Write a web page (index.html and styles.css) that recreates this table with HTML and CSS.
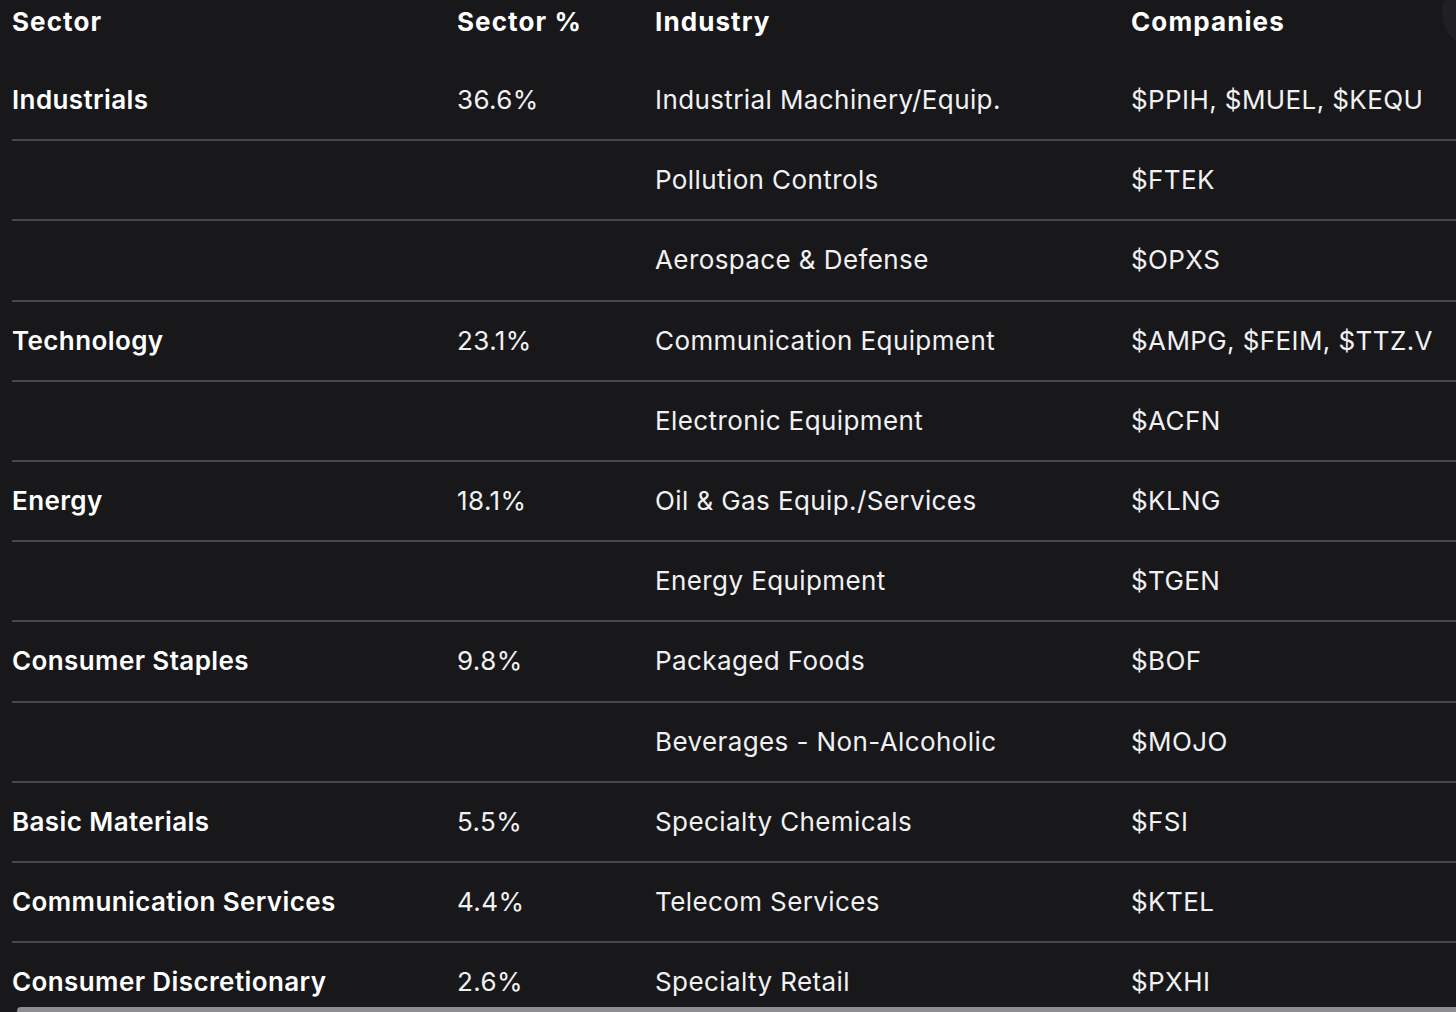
FILE: index.html
```html
<!DOCTYPE html>
<html lang="en">
<head>
<meta charset="utf-8">
<title>Sector breakdown</title>
<link rel="stylesheet" href="styles.css">
</head>
<body>
<div class="scroller">
  <table class="sectors">
    <thead>
      <tr>
        <th class="c-sector">Sector</th>
        <th class="c-pct">Sector %</th>
        <th class="c-ind">Industry</th>
        <th class="c-co">Companies</th>
      </tr>
    </thead>
    <tbody>
      <tr><td class="name">Industrials</td><td>36.6%</td><td>Industrial Machinery/Equip.</td><td>$PPIH, $MUEL, $KEQU</td></tr>
      <tr><td class="name"></td><td></td><td>Pollution Controls</td><td>$FTEK</td></tr>
      <tr><td class="name"></td><td></td><td>Aerospace &amp; Defense</td><td>$OPXS</td></tr>
      <tr><td class="name">Technology</td><td>23.1%</td><td>Communication Equipment</td><td>$AMPG, $FEIM, $TTZ.V</td></tr>
      <tr><td class="name"></td><td></td><td>Electronic Equipment</td><td>$ACFN</td></tr>
      <tr><td class="name">Energy</td><td>18.1%</td><td>Oil &amp; Gas Equip./Services</td><td>$KLNG</td></tr>
      <tr><td class="name"></td><td></td><td>Energy Equipment</td><td>$TGEN</td></tr>
      <tr><td class="name">Consumer Staples</td><td>9.8%</td><td>Packaged Foods</td><td>$BOF</td></tr>
      <tr><td class="name"></td><td></td><td>Beverages - Non-Alcoholic</td><td>$MOJO</td></tr>
      <tr><td class="name">Basic Materials</td><td>5.5%</td><td>Specialty Chemicals</td><td>$FSI</td></tr>
      <tr><td class="name">Communication Services</td><td>4.4%</td><td>Telecom Services</td><td>$KTEL</td></tr>
      <tr><td class="name">Consumer Discretionary</td><td>2.6%</td><td>Specialty Retail</td><td>$PXHI</td></tr>
    </tbody>
  </table>
  <div class="corner-btn"></div>
  <div class="hscroll"></div>
</div>
</body>
</html>
```

FILE: styles.css
```css
html, body {
  margin: 0;
  padding: 0;
  background: #18181b;
}

body {
  font-family: Inter, "Noto Sans", sans-serif;
  color: #f4f4f5;
  height: 1012px;
  overflow: hidden;
}

.scroller {
  position: relative;
  width: 1456px;
  height: 1012px;
  overflow: hidden;
}

.sectors {
  border-collapse: collapse;
  margin-left: 12px;
  width: 1600px;
  table-layout: fixed;
  font-size: 26px;
  letter-spacing: 0.4px;
}

.c-sector { width: 445px; }
.c-pct { width: 198px; }
.c-ind { width: 476px; }
.c-co { width: 481px; }

.sectors th {
  text-align: left;
  font-weight: 700;
  color: #ffffff;
  padding: 6px 0 23px 0;
  line-height: 32px;
  vertical-align: top;
  letter-spacing: 1.1px;
}

.sectors td {
  height: 78.2px;
  padding: 0;
  line-height: 32px;
  vertical-align: middle;
  font-weight: 400;
  color: #f1f1f2;
  white-space: nowrap;
}

.sectors tbody tr {
  border-bottom: 2px solid #47474b;
}

.sectors td.name {
  font-weight: 600;
  color: #ffffff;
  letter-spacing: 0.4px;
}

.corner-btn {
  position: absolute;
  top: -22px;
  left: 1442px;
  width: 70px;
  height: 70px;
  border-radius: 50%;
  background: rgba(255, 255, 255, 0.035);
}

.hscroll {
  position: absolute;
  left: 17px;
  bottom: 0;
  width: 1500px;
  height: 5px;
  background: #8e8e90;
  border-radius: 4px 0 0 0;
}
```
